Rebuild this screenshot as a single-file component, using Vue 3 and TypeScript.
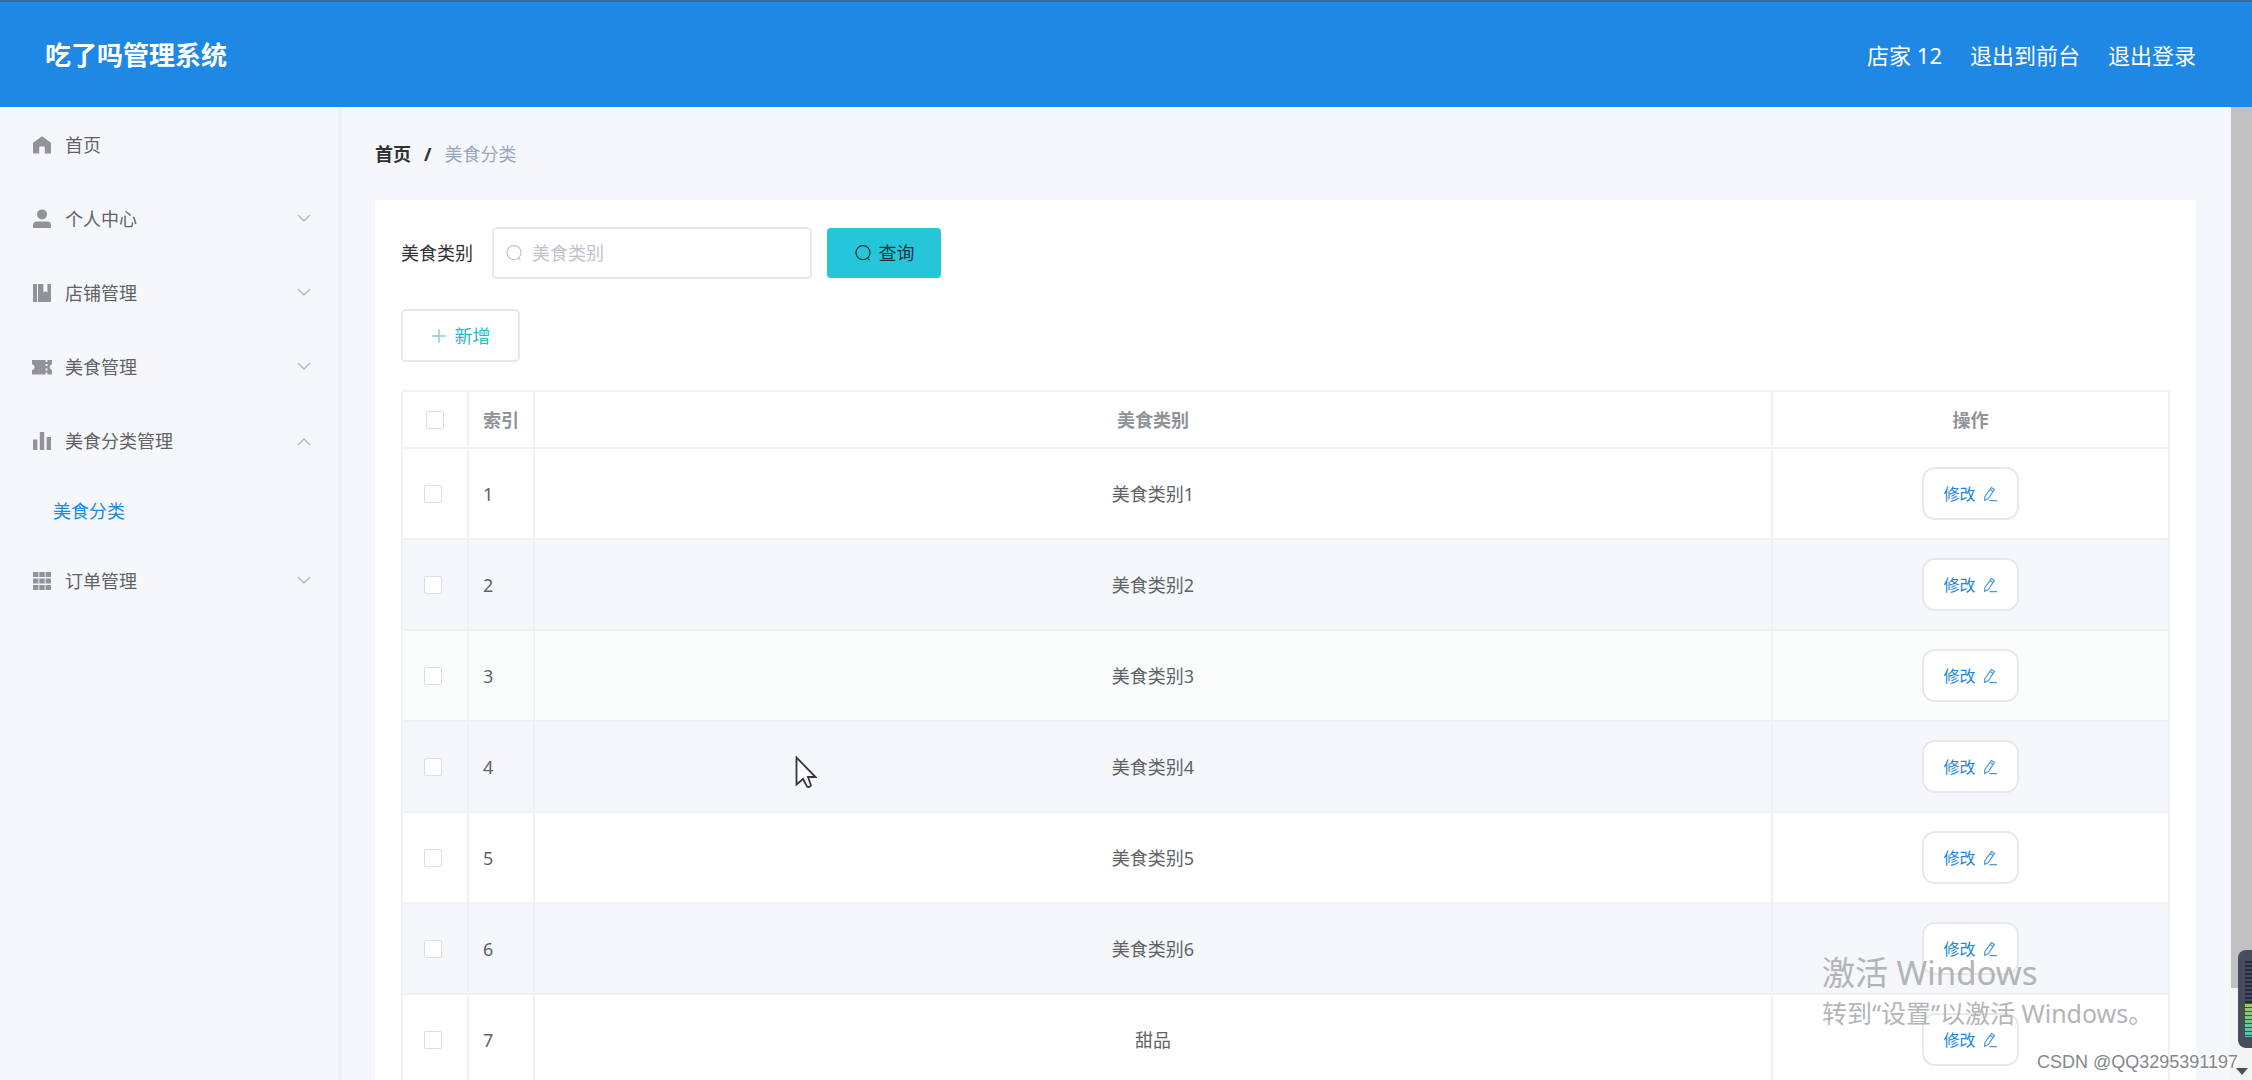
<script setup lang="ts">
import { ref } from 'vue'

interface MenuItem {
  label: string
  icon: string
  open?: boolean
  children?: string[]
}

const icons: Record<string, string> = {
  home: 'M10 1.2 18.6 7.6Q19 8 19 8.6V18.4H12.8V13Q12.8 11.6 11.6 11.6H8.4Q7.2 11.6 7.2 13V18.4H1V8.6Q1 8 1.4 7.6Z',
  user: 'M10 0.4A5 5 0 1 1 10 10.4A5 5 0 1 1 10 0.4ZM4.6 12.6H15.4Q19 12.6 19 16.4V18Q19 19 18 19H2Q1 19 1 18V16.4Q1 12.6 4.6 12.6Z',
  book: 'M1 1H5V19H1ZM6 1H11.4V9.6L13.4 8.2 15.4 9.6V1H18Q19 1 19 2V18Q19 19 18 19H6Z',
  ticket: 'M0 3H13.6V5H15.4V3H20.4V7.2Q17.6 8 17.6 10.2 17.6 12.4 20.4 13.2V17.6H15.4V15.4H13.6V17.6H0V13.2Q2.6 12.4 2.6 10.2 2.6 8 0 7.2ZM13.6 7V9H15.4V7ZM13.6 11.4V13.4H15.4V11.4Z',
  chart: 'M1 8.4H5.4V19H1ZM7.8 1H12.2V19H7.8ZM14.6 6H19V19H14.6Z',
  grid: 'M1 1H6.4V6H1ZM7.3 1H12.7V6H7.3ZM13.6 1H19V6H13.6ZM1 7.5H6.4V12.5H1ZM7.3 7.5H12.7V12.5H7.3ZM13.6 7.5H19V12.5H13.6ZM1 14H6.4V19H1ZM7.3 14H12.7V19H7.3ZM13.6 14H19V19H13.6Z',
}

const menu: MenuItem[] = [
  { label: '首页', icon: 'home' },
  { label: '个人中心', icon: 'user', open: false },
  { label: '店铺管理', icon: 'book', open: false },
  { label: '美食管理', icon: 'ticket', open: false },
  { label: '美食分类管理', icon: 'chart', open: true, children: ['美食分类'] },
  { label: '订单管理', icon: 'grid', open: false },
]

const rows: string[] = ['美食类别1', '美食类别2', '美食类别3', '美食类别4', '美食类别5', '美食类别6', '甜品']
const hovered = ref(2)
const keyword = ref('')
</script>

<template>
  <div class="app">
    <header class="topbar">
      <h1 class="brand">吃了吗管理系统</h1>
      <nav class="account">
        <span>店家 12</span>
        <a href="#front">退出到前台</a>
        <a href="#logout">退出登录</a>
      </nav>
    </header>

    <div class="body">
      <aside class="sidebar">
        <ul class="menu">
          <li v-for="item in menu" :key="item.label">
            <a class="menu-item" href="#menu">
              <svg class="menu-icon" viewBox="0 0 20 20"><path :d="icons[item.icon]" fill-rule="evenodd" /></svg>
              <span class="menu-label">{{ item.label }}</span>
              <svg v-if="item.open !== undefined" class="chevron" :class="{ up: item.open }" viewBox="0 0 14 14">
                <path d="M1 3 7 9 13 3" />
              </svg>
            </a>
            <a v-for="child in item.children" :key="child" class="submenu-item" href="#category">{{ child }}</a>
          </li>
        </ul>
      </aside>

      <main class="content">
        <nav class="breadcrumb">
          <a href="#home">首页</a>
          <span class="slash">/</span>
          <span class="current">美食分类</span>
        </nav>

        <section class="card">
          <form class="search" @submit.prevent>
            <label for="keyword">美食类别</label>
            <div class="field">
              <svg class="glass" viewBox="0 0 18 18"><circle cx="9" cy="8.6" r="7" /><path d="M13 13.6 15.6 16.4" /></svg>
              <input id="keyword" v-model="keyword" type="text" placeholder="美食类别" />
            </div>
            <button class="btn-query" type="submit">
              <svg class="glass" viewBox="0 0 18 18"><circle cx="9" cy="8.6" r="7" /><path d="M13 13.6 15.6 16.4" /></svg>
              <span>查询</span>
            </button>
          </form>

          <button class="btn-add" type="button">
            <svg class="plus" viewBox="0 0 16 16"><path d="M8 1V15M1 8H15" /></svg>
            <span>新增</span>
          </button>

          <table class="grid">
            <colgroup>
              <col class="col-check" />
              <col class="col-index" />
              <col />
              <col class="col-action" />
            </colgroup>
            <thead>
              <tr>
                <th class="check"><input type="checkbox" aria-label="全选" /></th>
                <th class="index">索引</th>
                <th>美食类别</th>
                <th>操作</th>
              </tr>
            </thead>
            <tbody>
              <tr v-for="(name, i) in rows" :key="name" :class="{ striped: i % 2 === 1, hovered: i === hovered }">
                <td class="check"><input type="checkbox" :aria-label="name" /></td>
                <td class="index">{{ i + 1 }}</td>
                <td>{{ name }}</td>
                <td>
                  <button class="btn-edit" type="button">
                    <span>修改</span>
                    <svg class="pen" viewBox="0 0 16 16"><path d="M9.4 1.6 12.4 3.4 6.4 12.6 2.6 14.4 2.8 10.6ZM8.2 3.6 11 5.4M7.4 14.6H15" /></svg>
                  </button>
                </td>
              </tr>
            </tbody>
          </table>
        </section>
      </main>

      <div class="scrollbar">
        <div class="thumb"></div>
        <svg class="scroll-arrow" viewBox="0 0 12 7"><path d="M0 0H12L6 7Z" /></svg>
      </div>
    </div>

    <svg class="cursor" viewBox="0 0 22 34">
      <path d="M1.5 1.5V28.5L8 23 12 30.5Q14 32 16 29.5L13 21H20.5Z" />
    </svg>

    <div class="activation">
      <p class="activation-title">激活 Windows</p>
      <p class="activation-text">转到“设置”以激活 Windows。</p>
    </div>
    <div class="meter"><div class="meter-off"></div><div class="meter-on"></div></div>
    <div class="credit">CSDN @QQ3295391197</div>
  </div>
</template>

<style>
body {
  margin: 0;
  overflow: hidden;
}
</style>

<style scoped>
.app {
  position: relative;
  display: flex;
  flex-direction: column;
  height: 100vh;
  overflow: hidden;
  background: #f5f7fa;
  color: #606266;
  font-family: "Noto Sans", "Noto Sans CJK SC", sans-serif;
  font-size: 18px;
  line-height: 24px;
}

.app * {
  box-sizing: border-box;
}

a {
  color: inherit;
  text-decoration: none;
}

button,
input {
  font: inherit;
}

svg {
  flex: none;
}

.topbar {
  display: flex;
  flex: none;
  align-items: center;
  justify-content: space-between;
  height: 107px;
  padding: 0 56px 0 45px;
  border-top: 2px solid #2c6ca6;
  background: #1f88e5;
  color: #fff;
}

.brand {
  margin: 0;
  font-size: 26px;
  line-height: 36px;
}

.account {
  display: flex;
  gap: 28px;
  font-size: 22px;
  line-height: 30px;
}

.body {
  display: flex;
  flex: 1;
  min-height: 0;
}

.sidebar {
  flex: none;
  width: 342px;
  border-right: 4px solid #eff1f4;
}

.menu {
  margin: 0;
  padding: 1px 0 0;
  list-style: none;
}

.menu-item {
  display: flex;
  align-items: center;
  gap: 13px;
  height: 74px;
  padding: 0 27px 0 32px;
}

.menu-icon {
  width: 20px;
  height: 20px;
  fill: #909399;
}

.menu-label {
  flex: 1;
}

.chevron {
  width: 14px;
  height: 14px;
  fill: none;
  stroke: #b4b7bc;
  stroke-width: 1.4;
}

.chevron.up {
  transform: scaleY(-1);
}

.submenu-item {
  display: flex;
  align-items: center;
  height: 66px;
  padding-left: 53px;
  color: #2187dc;
}

.content {
  flex: 1;
  min-width: 0;
  padding: 0 35px 0 33px;
}

.breadcrumb {
  display: flex;
  align-items: center;
  gap: 13px;
  height: 93px;
  color: #303133;
  font-weight: 700;
}

.breadcrumb .current {
  color: #97a8be;
  font-weight: 400;
}

.card {
  padding: 27px 26px;
  background: #fff;
}

.search {
  display: flex;
  align-items: center;
  color: #303133;
}

.field {
  display: flex;
  align-items: center;
  gap: 9px;
  width: 320px;
  height: 52px;
  margin: 0 15px 0 19px;
  padding: 0 11px;
  border: 2px solid #e6e8eb;
  border-radius: 5px;
  background: #fff;
}

.field input {
  flex: 1;
  min-width: 0;
  padding: 0;
  border: 0;
  outline: 0;
  background: none;
  color: #606266;
}

.field input::placeholder {
  color: #c0c4cc;
  opacity: 1;
}

.glass {
  width: 18px;
  height: 18px;
  fill: none;
  stroke: currentColor;
  stroke-width: 1.2;
}

.field .glass {
  color: #c0c4cc;
}

.btn-query {
  display: flex;
  align-items: center;
  justify-content: center;
  gap: 7px;
  width: 114px;
  height: 50px;
  padding: 0;
  border: 0;
  border-radius: 4px;
  background: #26c6da;
  color: #17343c;
}

.btn-add {
  display: flex;
  align-items: center;
  justify-content: center;
  gap: 8px;
  width: 119px;
  height: 53px;
  margin: 30px 0 28px;
  padding: 0;
  border: 2px solid #e6e8eb;
  border-radius: 5px;
  background: #fff;
  color: #26b9ca;
}

.plus {
  width: 16px;
  height: 16px;
  stroke: #90ccd4;
  stroke-width: 1.4;
}

.grid {
  width: 100%;
  table-layout: fixed;
  border-collapse: collapse;
  text-align: center;
}

.col-check,
.col-index {
  width: 66px;
}

.col-action {
  width: 397px;
}

.grid th,
.grid td {
  padding: 0;
  border: 2px solid #eff1f4;
}

.grid th {
  height: 57px;
  color: #909399;
}

.grid td {
  height: 91px;
}

.grid .index {
  padding-left: 14px;
  text-align: left;
}

.grid .check {
  line-height: 0;
}

.grid td.check {
  padding-right: 4px;
}

.striped {
  background: #f5f7fa;
}

.hovered {
  background: #fbfdfd;
}

.check input {
  width: 18px;
  height: 18px;
  margin: 0;
  border: 1px solid #dcdfe6;
  border-radius: 2px;
  appearance: none;
  background: #fff;
}

.btn-edit {
  display: inline-flex;
  align-items: center;
  justify-content: center;
  gap: 6px;
  width: 97px;
  height: 53px;
  padding: 0;
  border: 2px solid #e6e8eb;
  border-radius: 13px;
  background: #fff;
  color: #2187dc;
  font-size: 16px;
  vertical-align: middle;
}

.pen {
  width: 16px;
  height: 16px;
  fill: none;
  stroke: #4a9bdd;
  stroke-width: 1.2;
}

.scrollbar {
  display: flex;
  flex: none;
  flex-direction: column;
  align-items: center;
  justify-content: space-between;
  width: 21px;
  padding-bottom: 5px;
  background: #f3f4f6;
}

.thumb {
  width: 100%;
  height: 91%;
  background: #c1c1c1;
}

.scroll-arrow {
  width: 12px;
  height: 7px;
  fill: #505050;
}

.cursor {
  position: absolute;
  top: 756px;
  left: 795px;
  width: 22px;
  height: 34px;
  fill: #fff;
  stroke: #33363c;
  stroke-width: 1.8;
}

.activation {
  position: absolute;
  right: 110px;
  bottom: 49px;
  width: 320px;
  color: #a8a9ac;
  opacity: 0.85;
  white-space: nowrap;
  pointer-events: none;
}

.activation p {
  margin: 0;
}

.activation-title {
  font-size: 33px;
  line-height: 44px;
}

.activation-text {
  font-size: 25px;
  line-height: 36px;
}

.meter {
  position: absolute;
  right: 0;
  bottom: 32px;
  width: 14px;
  height: 98px;
  padding: 11px 0 0 7px;
  border-radius: 8px 0 0 8px;
  background: #474d5d;
}

.meter-off {
  height: 43px;
  background: repeating-linear-gradient(#262a3e 0 2px, #474d5d 2px 4px);
}

.meter-on {
  height: 33px;
  background: repeating-linear-gradient(transparent 0 3px, #474d5d 3px 4px), linear-gradient(#a0c860, #4dc3b4);
}

.credit {
  position: absolute;
  right: 14px;
  bottom: 6px;
  color: #85878b;
  font-family: "Liberation Sans", sans-serif;
  font-size: 18px;
  text-shadow: 1px 1px 0 #fff;
}
</style>
